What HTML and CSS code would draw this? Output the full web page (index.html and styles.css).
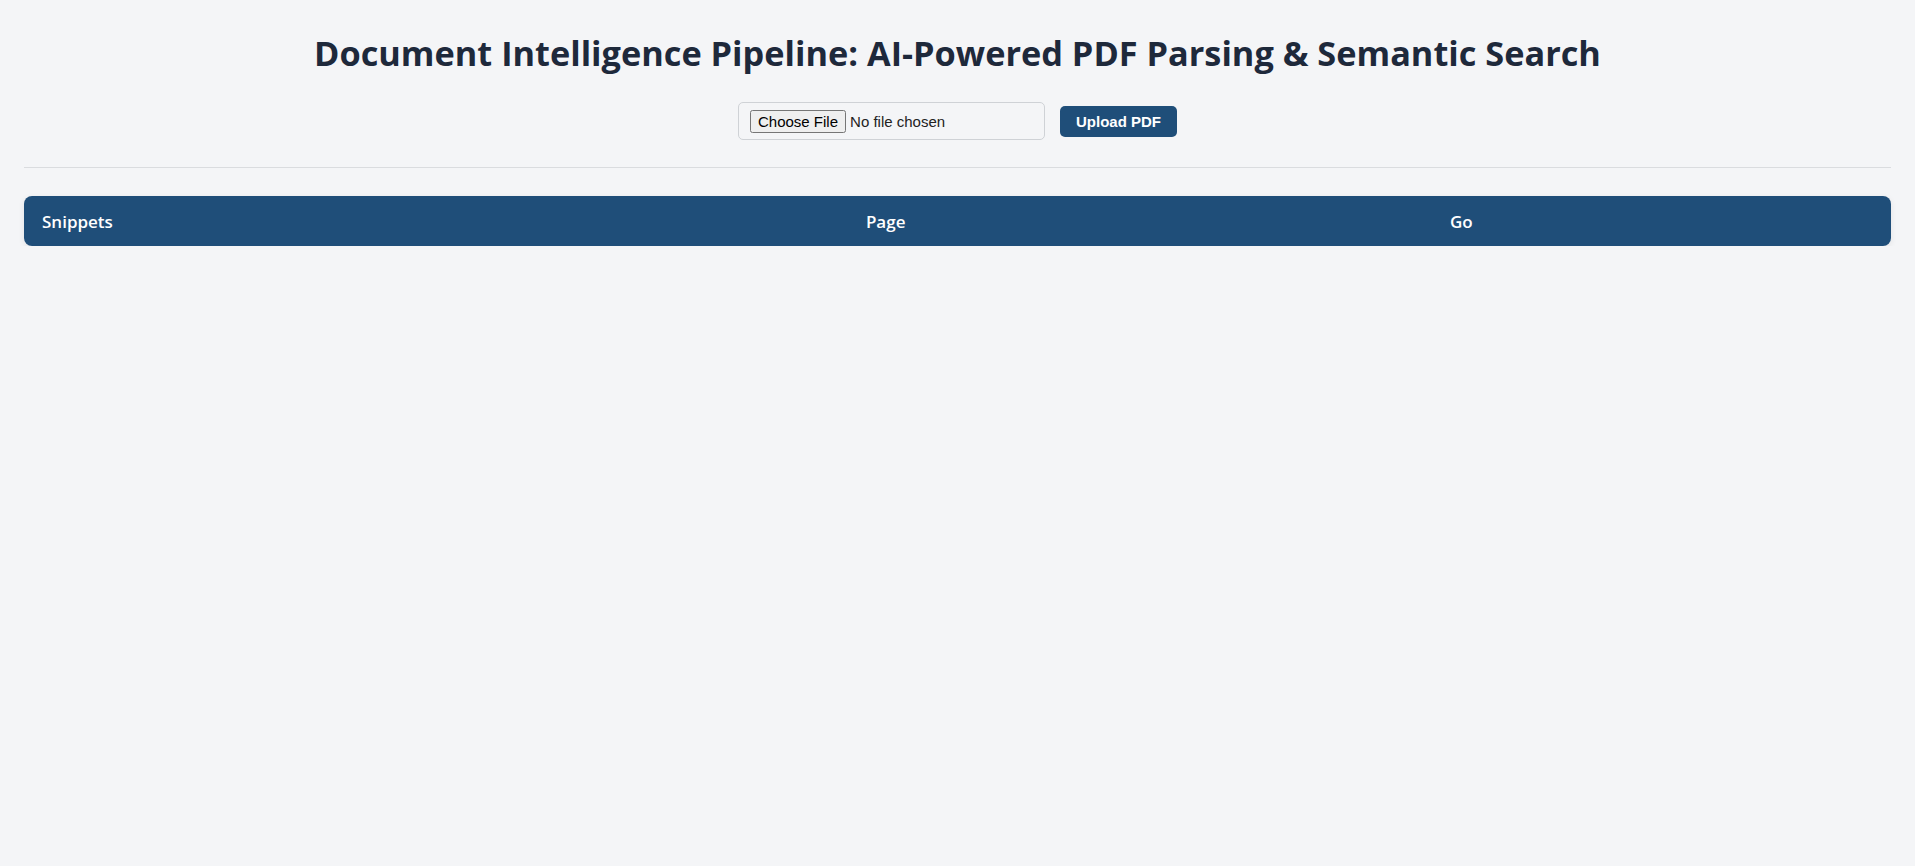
FILE: index.html
```html
<!DOCTYPE html>
<html lang="en">
<head>
<meta charset="utf-8">
<title>Document Intelligence Pipeline</title>
<link rel="stylesheet" href="styles.css">
</head>
<body>
<div class="page">
  <h1 class="title">Document Intelligence Pipeline: AI-Powered PDF Parsing &amp; Semantic Search</h1>
  <form class="upload" onsubmit="return false">
    <input class="file-input" type="file" accept="application/pdf">
    <button class="upload-btn" type="submit">Upload PDF</button>
  </form>
  <hr class="divider">
  <table class="results">
    <thead>
      <tr>
        <th class="col-snippet">Snippets</th>
        <th class="col-page">Page</th>
        <th class="col-go">Go</th>
      </tr>
    </thead>
    <tbody></tbody>
  </table>
</div>
</body>
</html>
```
FILE: styles.css
```css
html, body {
  margin: 0;
  padding: 0;
  background: #f4f5f7;
}
body {
  font-family: "Segoe UI", "Open Sans", "Noto Sans", sans-serif;
  color: #1f2937;
}
.page {
  padding: 0 24px;
}
.title {
  margin: 0;
  padding-top: 30px;
  text-align: center;
  font-size: 34.3px;
  font-weight: 700;
  line-height: 46px;
  color: #1e293b;
}
.upload {
  display: flex;
  justify-content: center;
  align-items: center;
  gap: 15px;
  margin-top: 26px;
}
.file-input {
  box-sizing: border-box;
  width: 307px;
  height: 38px;
  padding: 7px 11px;
  border: 1px solid #cfd2d6;
  border-radius: 5px;
  background: #f4f5f7;
  font-family: "Liberation Sans", Arial, sans-serif;
  font-size: 15px;
  color: #222;
}
.upload-btn {
  box-sizing: border-box;
  height: 31px;
  padding: 0 16px;
  border: none;
  border-radius: 5px;
  background: #1f4e79;
  color: #fff;
  font-family: "Liberation Sans", Arial, sans-serif;
  font-size: 15px;
  font-weight: 700;
  cursor: pointer;
}
.divider {
  margin: 27px 0 0;
  border: none;
  border-top: 1px solid #dadcdf;
  height: 0;
}
.results {
  width: 100%;
  margin-top: 28px;
  border-collapse: separate;
  border-spacing: 0;
  border-radius: 8px;
  box-shadow: 0 2px 6px rgba(0, 0, 0, 0.08);
  table-layout: fixed;
}
.results th {
  background: #1f4e79;
  color: #fff;
  text-align: left;
  font-size: 17px;
  font-weight: 600;
  height: 50px;
  padding: 0 18px;
  box-sizing: border-box;
}
.col-snippet { width: 44.13%; border-radius: 8px 0 0 8px; }
.col-page { width: 31.28%; }
.col-go { border-radius: 0 8px 8px 0; }
```
